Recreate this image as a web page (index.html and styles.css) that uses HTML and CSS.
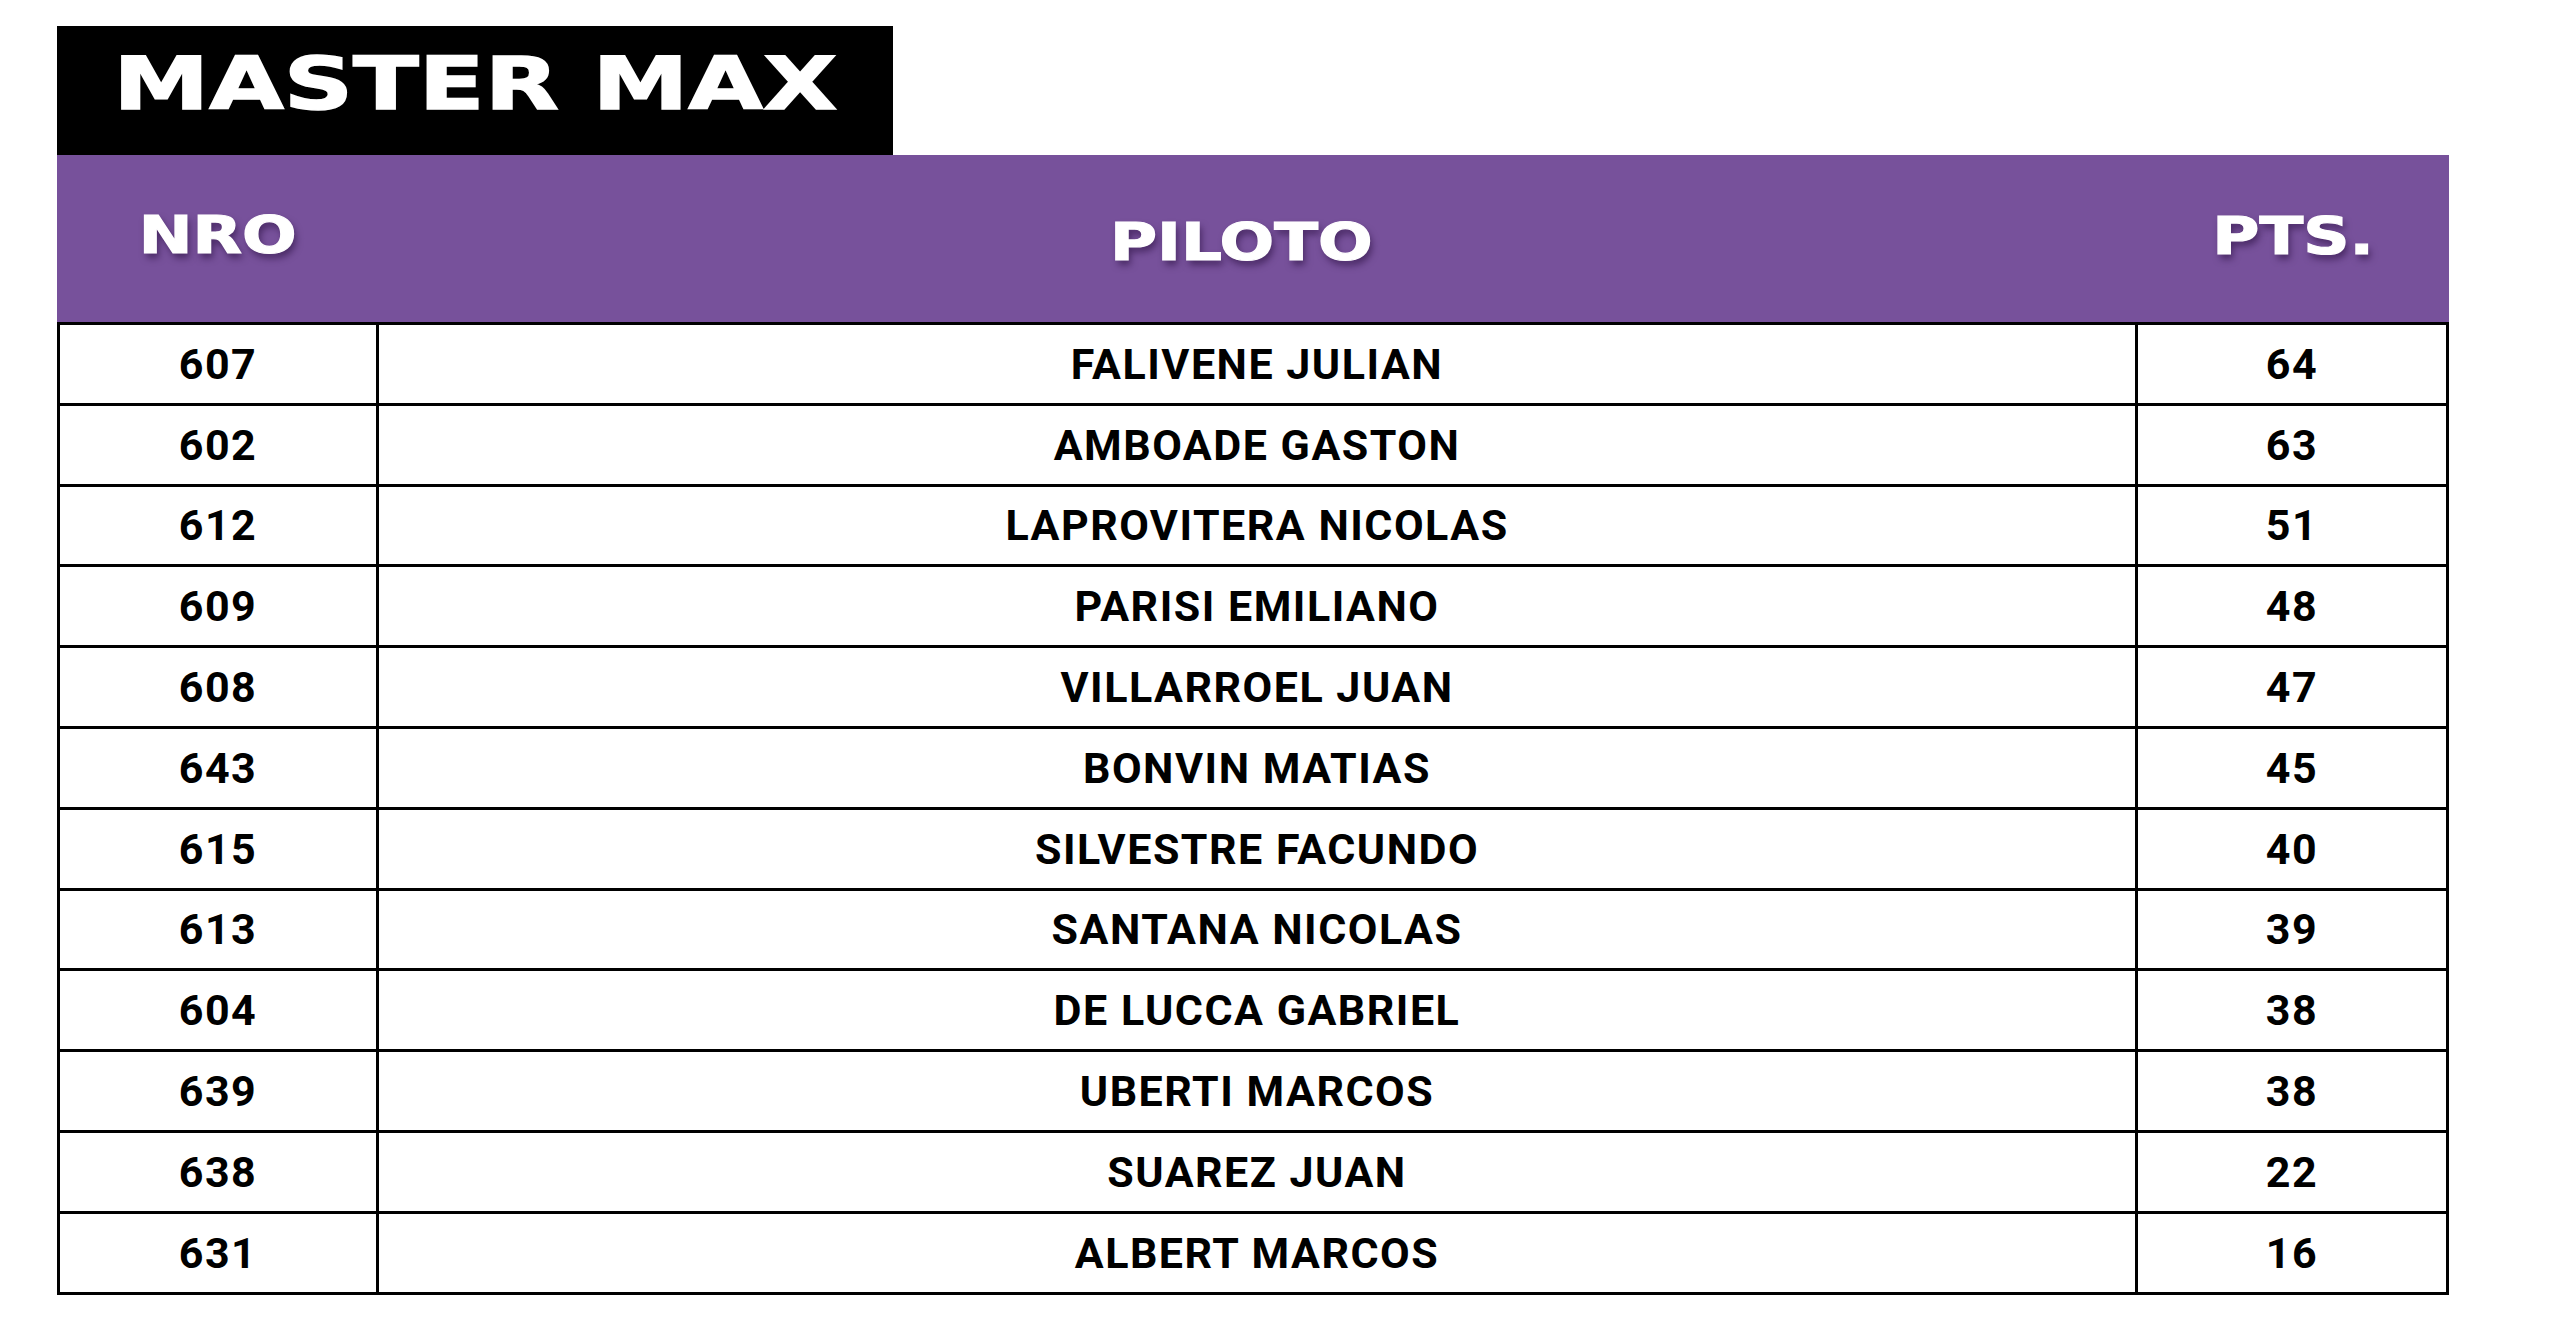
FILE: index.html
```html
<!DOCTYPE html>
<html lang="es">
<head>
<meta charset="utf-8">
<title>Master Max</title>
<link rel="stylesheet" href="styles.css">
</head>
<body>
<main class="page">
  <div class="title-box"><span class="title">MASTER MAX</span></div>
  <div class="head">
    <div class="hcell hcell-nro"><span class="hlabel">NRO</span></div>
    <div class="hcell hcell-piloto"><span class="hlabel">PILOTO</span></div>
    <div class="hcell hcell-pts"><span class="hlabel">PTS.</span></div>
  </div>
  <div class="grid">
    <div class="cell">607</div><div class="cell">FALIVENE JULIAN</div><div class="cell">64</div>
    <div class="cell">602</div><div class="cell">AMBOADE GASTON</div><div class="cell">63</div>
    <div class="cell">612</div><div class="cell">LAPROVITERA NICOLAS</div><div class="cell">51</div>
    <div class="cell">609</div><div class="cell">PARISI EMILIANO</div><div class="cell">48</div>
    <div class="cell">608</div><div class="cell">VILLARROEL JUAN</div><div class="cell">47</div>
    <div class="cell">643</div><div class="cell">BONVIN MATIAS</div><div class="cell">45</div>
    <div class="cell">615</div><div class="cell">SILVESTRE FACUNDO</div><div class="cell">40</div>
    <div class="cell">613</div><div class="cell">SANTANA NICOLAS</div><div class="cell">39</div>
    <div class="cell">604</div><div class="cell">DE LUCCA GABRIEL</div><div class="cell">38</div>
    <div class="cell">639</div><div class="cell">UBERTI MARCOS</div><div class="cell">38</div>
    <div class="cell">638</div><div class="cell">SUAREZ JUAN</div><div class="cell">22</div>
    <div class="cell">631</div><div class="cell">ALBERT MARCOS</div><div class="cell">16</div>
  </div>
</main>
</body>
</html>
```

FILE: styles.css
```css
html, body {
  margin: 0;
  padding: 0;
  background: #ffffff;
}

.page {
  padding: 26px 0 0 57px;
  width: 2392px;
}

.title-box {
  width: 836px;
  height: 129px;
  background: #000000;
  display: flex;
  align-items: center;
  justify-content: center;
  padding-bottom: 14px;
  box-sizing: border-box;
}

.title {
  display: inline-block;
  font-family: "DejaVu Sans", sans-serif;
  font-weight: 700;
  font-size: 73px;
  line-height: 1;
  color: #ffffff;
  transform: scaleX(1.32);
  -webkit-text-stroke: 1.5px #ffffff;
  white-space: nowrap;
}

.head {
  display: grid;
  grid-template-columns: 322px 1759px 311px;
  height: 167px;
  background: #77519b;
}

.hcell {
  display: flex;
  align-items: center;
  justify-content: center;
}

.hcell-nro { padding-bottom: 6px; }
.hcell-piloto { padding-top: 8px; padding-right: 34px; }
.hcell-pts { padding-bottom: 5px; }

.hlabel {
  display: inline-block;
  font-family: "DejaVu Sans", sans-serif;
  font-weight: 700;
  font-size: 51px;
  line-height: 1;
  color: #ffffff;
  transform: scaleX(1.26);
  -webkit-text-stroke: 1.2px #ffffff;
  text-shadow: 2px 5px 7px rgba(35, 10, 55, 0.55);
  white-space: nowrap;
}

.grid {
  display: grid;
  grid-template-columns: 319px 1759px 311px;
  grid-auto-rows: 80.8px;
  border-left: 3px solid #000;
  border-top: 3px solid #000;
}

.cell {
  border-right: 3px solid #000;
  border-bottom: 3px solid #000;
  display: flex;
  align-items: center;
  justify-content: center;
  font-family: "Roboto", sans-serif;
  font-weight: 700;
  font-size: 43px;
  letter-spacing: 1.5px;
  color: #000;
  white-space: nowrap;
}
```
